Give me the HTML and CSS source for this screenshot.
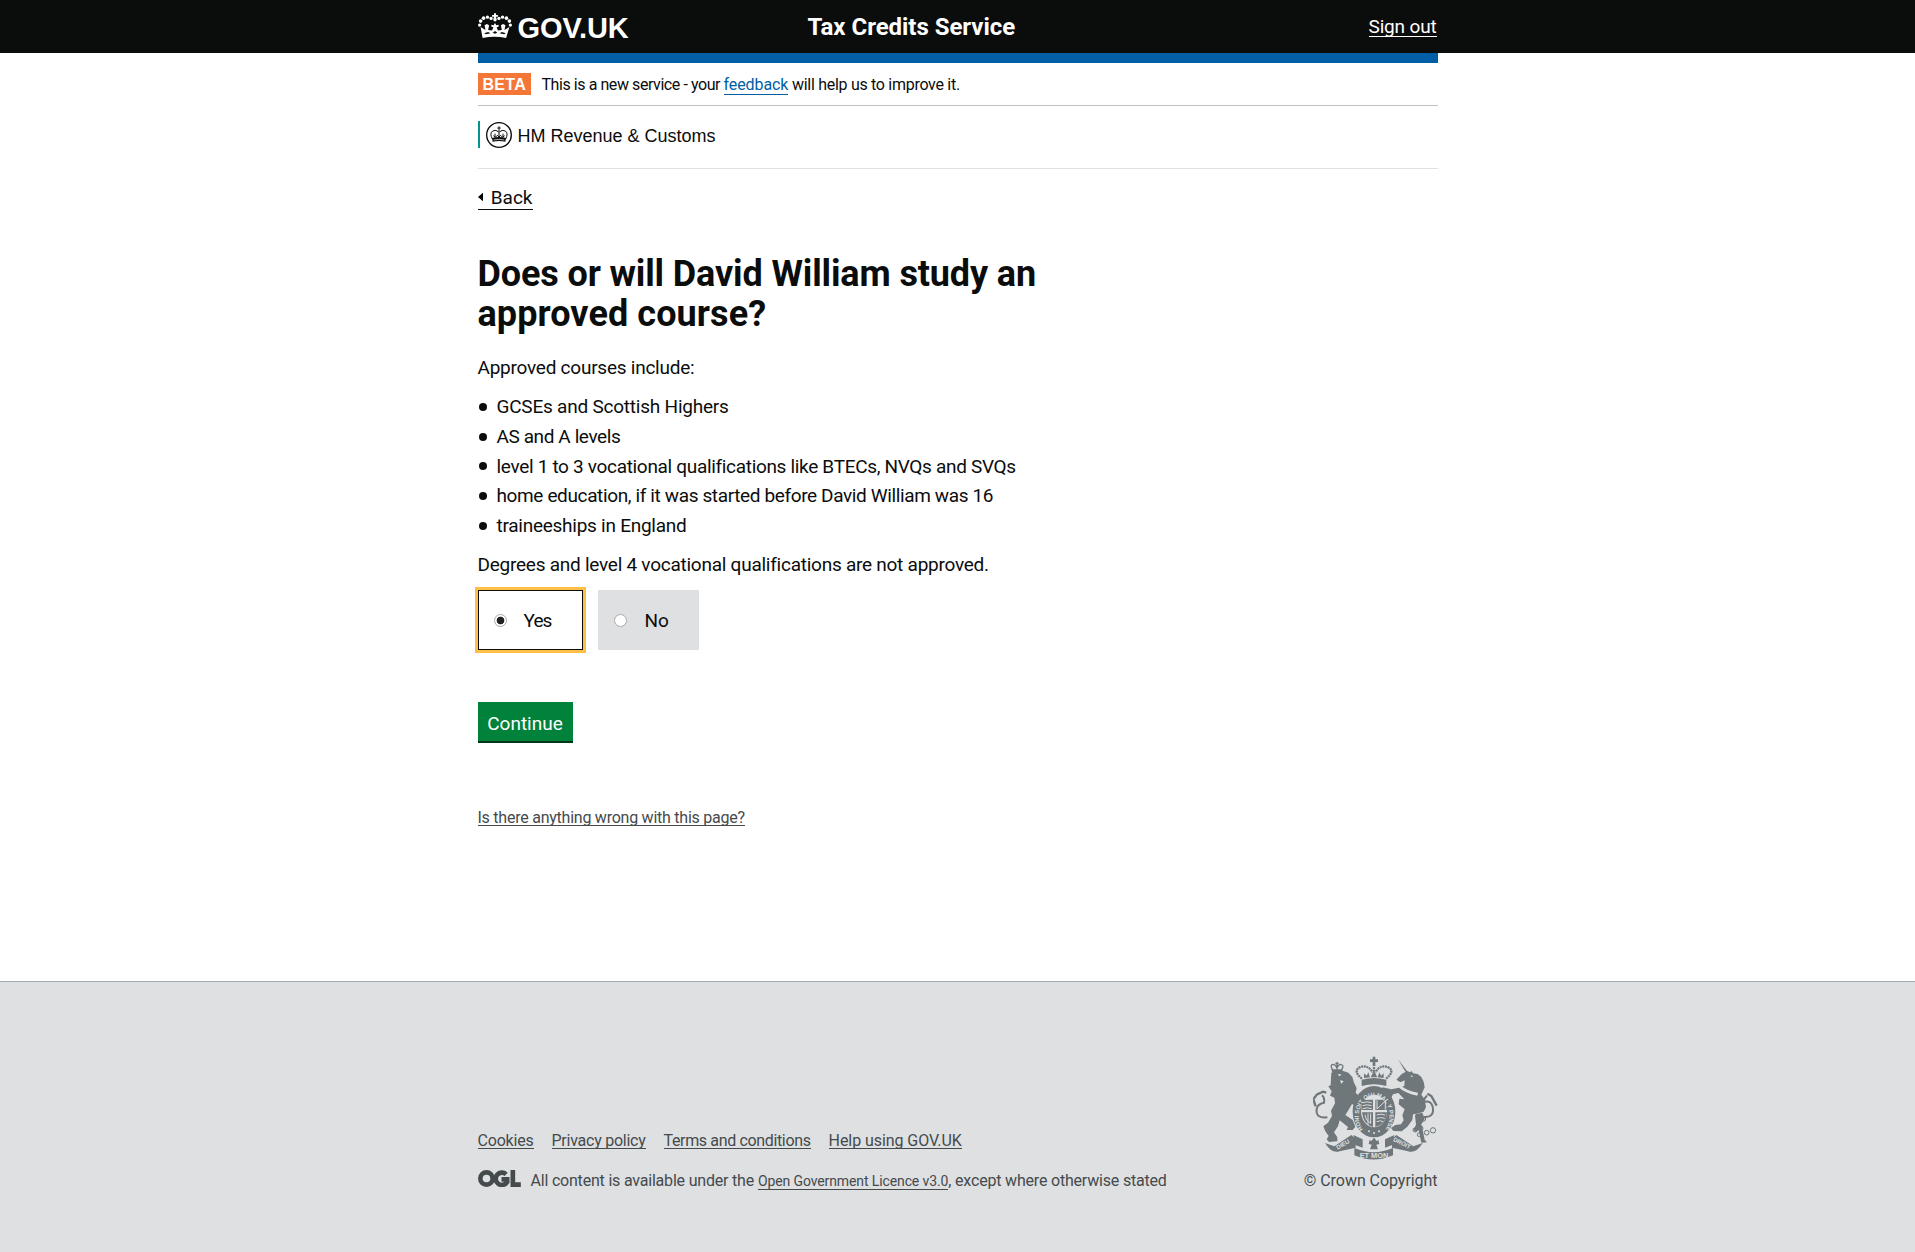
FILE: index.html
```html
<!DOCTYPE html>
<html lang="en">
<head>
<meta charset="utf-8">
<title>Tax Credits Service</title>
<link rel="stylesheet" href="styles.css">
</head>
<body>
<header class="site-header">
  <div class="wrap header-row">
    <a class="brand" href="#">
      <svg class="crown" viewBox="0 0 104 78" aria-hidden="true">
        <g fill="#fff">
          <path d="M49 0h6v5h6v6h-6l2 8h-10l2-8h-6V5h6z"/>
          <circle cx="52" cy="20" r="5"/><circle cx="40" cy="16" r="5"/><circle cx="64" cy="16" r="5"/>
          <circle cx="29" cy="12" r="5"/><circle cx="75" cy="12" r="5"/><circle cx="17" cy="15" r="5.5"/><circle cx="87" cy="15" r="5.5"/>
          <circle cx="8" cy="24" r="5.5"/><circle cx="96" cy="24" r="5.5"/><circle cx="5" cy="36" r="5"/><circle cx="99" cy="36" r="5"/>
          <path d="M8 42l15 9-3-14 7-4 7 4-3 14 12 2 4-10-6-2v-6l7 2 4-7 4 7 7-2v6l-6 2 4 10 12-2-3-14 7-4 7 4-3 14 15-9-10 34q-36-9-72 0z"/>
        </g>
        <g fill="#0b0c0c"><path d="M19 61l12-4 7 4-14 3zM85 61l-12-4-7 4 14 3zM45 60l7-6 7 6-7 3z"/></g>
      </svg>
      <span class="brand-name">GOV.UK</span>
    </a>
    <span class="service">Tax Credits Service</span>
    <a class="sign-out" href="#">Sign out</a>
  </div>
</header>
<main class="wrap">
  <div class="blue-bar"></div>
  <div class="phase">
    <strong class="badge">BETA</strong>
    <span class="phase-text"><span class="phase-start">This is a new service - your </span><a href="#">feedback</a> will help us to improve it.</span>
  </div>
  <div class="org">
    <div class="org-logo">
      <svg viewBox="0 0 78 78" class="org-crest" aria-hidden="true">
        <circle cx="39" cy="39" r="37" fill="none" stroke="#0b0c0c" stroke-width="4"/>
        <g fill="none" stroke="#0b0c0c" stroke-width="3"><path d="M19 51Q10 34 20 27q10-6 19 4 9-10 19-4 10 7 1 24"/><path d="M39 13v16M34 18h10M39 32v14M27 35v10M51 35v10M22 41l6 5 6-6 5 5 5-5 6 6 6-5"/></g>
        <path d="M18 48q21-6 42 0l-2 11q-19-4-38 0z" fill="#0b0c0c"/><path d="M23 54q16-4 32 0" stroke="#fff" stroke-width="2" fill="none"/>
      </svg>
      <span class="org-name">HM Revenue &amp; Customs</span>
    </div>
  </div>
  <a class="back" href="#"><svg viewBox="0 0 6 10" class="back-arrow" aria-hidden="true"><path d="M6 0v10L0 5z"/></svg><span>Back</span></a>
  <h1><span class="heading-start">Does or will David William study an</span><br><span class="heading-end">approved course?</span></h1>
  <p class="intro">Approved courses include:</p>
  <ul class="courses">
    <li class="schools">GCSEs and Scottish Highers</li>
    <li class="a-levels">AS and A levels</li>
    <li class="vocational">level 1 to 3 vocational qualifications like BTECs, NVQs and SVQs</li>
    <li class="home">home education, if it was started before David William was 16</li>
    <li class="trainee">traineeships in England</li>
  </ul>
  <p class="note">Degrees and level 4 vocational qualifications are not approved.</p>
  <form class="answers">
    <label class="choice selected"><input type="radio" name="approved" checked><span>Yes</span></label>
    <label class="choice"><input type="radio" name="approved"><span>No</span></label>
  </form>
  <button class="continue" type="button">Continue</button>
  <a class="report" href="#">Is there anything wrong with this page?</a>
</main>
<footer class="site-footer">
  <div class="wrap footer-row">
    <div class="footer-meta">
      <nav class="footer-links"><a class="cookies" href="#">Cookies</a><a class="privacy" href="#">Privacy policy</a><a class="terms" href="#">Terms and conditions</a><a class="help" href="#">Help using GOV.UK</a></nav>
      <div class="licence">
        <svg class="ogl" viewBox="0 0 128 51" aria-hidden="true"><g fill="none" stroke="#454a4d" stroke-width="14"><circle cx="25" cy="25.500" r="18.500"/><path d="M84 13A18.500 18.500 0 1 0 87 36V28H70M104 0V44H128"/></g></svg>
        <span class="licence-start">All content is available under the</span>
        <a class="licence-link" href="#">Open Government Licence v3.0</a><span class="licence-end">, except where otherwise stated</span>
      </div>
    </div>
    <div class="copyright">
      <svg class="arms" viewBox="69 48 375 312" role="img" aria-label="Royal coat of arms">
        <g fill="#6f777b">
          <path d="M248 50h8v8h8v8h-8v12h-8V66h-8v-8h8z"/>
          <path d="M124 88h32l3 11q-16-5-31 3z"/>
          <path d="M124 98l34-6 17 6 12 13 5 17 8 16-3 14 12 12-10 10 15 10 4 15-15-3-17-10-10 17-10 16 22 15 8 20-8 10h-18l4-9-25-20-5 18-12 18 10 15v12l-25 2-7-8 6-10-10-14-6-15 14-11 12-20-3-16 12-22-2-17-13-6 5-13-10-15 7-3z"/>
          <path d="M324 58l30 39-5 3zM352 93l8 4 5-4 4 7 14 2 11 9 7 14 3 17-10 22 10 14 4 22-7 15-20 6-12 2-2 17-15 20-17 14-25-1-7-9 13-9 17-2 8-12-4-15 7-18-18-15 2-17 15 2-18-19-16 4-8 16 8 14-7 3-14-19 4-19-17-8 3-8 26 6 19-4 20-6 1-17-13 6-12-8 16-17z"/>
          <path d="M377 223l20-5 7 19-10 16 5 22 5 24 7 8-17 1-8-38-8 6-8-7 8-15-3-27z"/>
          <path d="M105 309l28 10 51-34 13 12v26l-48 11q-24 8-44-25zM398 309l-28 10-51-34-13 12v26l48 11q24 8 44-25z"/>
          <path d="M193 324q58 25 116 0v22q-58 25-116 0zM190 285l28 13v25l-22-8zM313 285l-28 13v25l22-8z"/>
          <path d="M215 119q37-10 74 0v19q-37-10-74 0zM222 114v-14l8 7 5-10 5 15zM242 112l10-20 10 20zM263 112l5-15 5 10 8-7v14z"/>
          <ellipse cx="252" cy="215" rx="64" ry="77"/>
          <path d="M252 293l8 10 5-3 3 12-9 2 5 14h-24l5-14-9-2 3-12 5 3z"/>
        </g>
        <g fill="none" stroke="#6f777b">
          <path d="M128 90q-10-17 2-17 8 1 11 12 3-11 10-12 13 1 4 17M141 66v20M136 70h10" stroke-width="4"/>
          <path d="M216 116Q188 94 209 82q24-10 39 15M288 116q28-22 7-34-24-10-39 15M252 81v15" stroke-width="7" stroke-dasharray="6 2"/>
          <path d="M112 232q-36 4-32-25 2-15 22-19 3-14-6-22M399 231q36 3 29-31-5-20-27-14 2-13 10-19" stroke-width="6"/>
          <path d="M77 199l-7-21 11-15 18-8 10 3M440 197l-16-29-12-7" stroke-width="7"/>
          <path d="M328 138q17 17 55 25" stroke="#dee0e2" stroke-width="9"/><path d="M330 151q22 17 52 22" stroke-width="7" stroke-dasharray="6 3"/>
          <g stroke-width="3"><circle cx="398" cy="205" r="6"/><circle cx="400" cy="237" r="7"/><circle cx="392" cy="265" r="7"/><circle cx="375" cy="270" r="6"/><circle cx="388" cy="284" r="6"/><circle cx="410" cy="278" r="7"/><circle cx="429" cy="271" r="8"/></g>
        </g>
        <ellipse cx="252" cy="213" rx="39" ry="49" fill="#dee0e2"/>
        <g fill="#6f777b"><path d="M216 179h33v31h-35zM256 179h32l3 31h-35zM216 217h33v44q-29-7-33-44zM256 217h35q-4 37-35 44z"/></g>
        <g stroke="#dee0e2" stroke-width="3" fill="none"><path d="M218 188q14-5 27 0M218 197q14-5 27 0M218 206q14-5 27 0M261 181v26l25-24v26M225 224q3 22 18 24M234 220v35M242 220v31M260 225q13-5 25 0M260 235q13-5 24 0M260 245q12-5 20 0"/></g>
        <path id="motto" d="M219 268A46 58 0 1 1 288 265" fill="none"/>
        <text class="arms-text garter"><textPath href="#motto" textLength="248" lengthAdjust="spacingAndGlyphs">HONI SOIT QUI MAL Y PENSE</textPath></text>
        <path d="M143 101l12 3-7 5zM151 120l10 4-8 8zM364 106l6 3-7 3z" fill="#dee0e2"/>
        <g fill="#dee0e2"><circle cx="237" cy="274" r="3"/><circle cx="252" cy="279" r="3"/><circle cx="267" cy="274" r="3"/></g>
        <text class="arms-text" transform="translate(143 329) rotate(-30)">DIEU</text>
        <text class="arms-text large" x="209" y="353" textLength="86" lengthAdjust="spacingAndGlyphs">ET MON</text>
        <text class="arms-text" transform="translate(308 302) rotate(27)">DROIT</text>
      </svg>
      <a class="copy" href="#">© Crown Copyright</a>
    </div>
  </div>
</footer>
</body>
</html>
```
FILE: styles.css
```css
* { box-sizing: border-box; }
body { margin: 0; font-family: Roboto, "Liberation Sans", sans-serif; font-size: 19px; line-height: 25px; color: #0b0c0c; background: #fff; }
a { color: inherit; text-decoration: none; }
.wrap { width: 960px; margin: 0 auto; }
span, a, p, li { white-space: nowrap; }

.site-header { height: 53px; background: #0b0c0c; color: #fff; }
.header-row { display: grid; grid-template-columns: 330px 1fr auto; align-items: start; }
.brand { display: flex; gap: 6px; }
.crown { width: 34px; height: 26px; margin-top: 13px; }
.brand-name { font-family: "Liberation Sans", Arial, sans-serif; font-size: 29px; font-weight: 700; line-height: 36px; margin-top: 10px; letter-spacing: -.1px; }
.service { font-size: 24px; font-weight: 700; line-height: 30px; margin-top: 12px; letter-spacing: -.04px; }
.sign-out { line-height: 22px; margin: 16px 1px 0 0; height: 21px; letter-spacing: -.17px; border-bottom: 1px solid #fff; }

.blue-bar { height: 10px; background: #005ea5; }
.phase { display: flex; align-items: center; gap: 11px; height: 43px; border-bottom: 1px solid #bfc1c3; font-size: 16px; }
.badge { width: 53px; height: 22px; background: #f47738; color: #fff; font: 700 16px/23px "Liberation Sans", sans-serif; padding-left: 5px; letter-spacing: .3px; }
.phase-text { letter-spacing: -.29px; }
.phase-start { letter-spacing: -.43px; }
.phase-text a { color: #005ea5; letter-spacing: -.1px; border-bottom: 1px solid #005ea5; }
.org { height: 63px; padding-top: 15px; border-bottom: 1px solid #dee0e2; }
.org-logo { display: flex; align-items: center; height: 27px; border-left: 2px solid #009390; padding-left: 6px; }
.org-crest { width: 26px; height: 26px; margin-right: 6px; }
.org-name { font-family: "Liberation Sans", Arial, sans-serif; font-size: 18px; line-height: 27px; padding-top: 4px; }

.back { display: flex; align-items: center; width: 55px; height: 25px; margin-top: 16px; line-height: 24px; border-bottom: 1px solid #0b0c0c; }
.back span { padding-top: 2px; }
.back-arrow { width: 6px; height: 10px; margin-right: 8px; }
h1 { margin: 44px 0 21px; font-size: 36px; line-height: 40px; font-weight: 700; }
.heading-start { letter-spacing: -.13px; }
.heading-end { letter-spacing: .08px; }
.intro { margin: 0 0 12px; letter-spacing: -.24px; }
.courses { list-style: none; margin: 0 0 11.25px; padding: 0; line-height: 29.75px; }
.courses li { display: flex; align-items: center; }
.courses li::before { content: ""; width: 8px; height: 8px; margin: 0 10px 0 1px; border-radius: 50%; background: #0b0c0c; }
.schools { letter-spacing: -.22px; }
.a-levels { letter-spacing: -.4px; }
.vocational { letter-spacing: -.32px; }
.home { letter-spacing: -.37px; }
.trainee { letter-spacing: -.26px; }
.note { margin: 0 0 13px; letter-spacing: -.25px; }
.answers { display: flex; gap: 15px; margin-bottom: 52px; }
.choice { display: flex; align-items: center; width: 101px; height: 60px; padding-left: 16px; background: #dee0e2; }
.choice input { appearance: none; width: 13px; height: 13px; margin: 0 18px 0 0; border: 1px solid #aaa; border-radius: 50%; background: #fff; }
.choice input:checked { margin-right: 17px; background: radial-gradient(circle, #222 3.5px, #fff 4.2px); }
.selected { width: 105px; padding-left: 15px; letter-spacing: -.9px; border: 1px solid #0b0c0c; background: #fff; outline: 3px solid #ffbf47; }
.continue { display: block; width: 95px; height: 41px; padding: 5px 0 0; border: 0; border-bottom: 2px solid #003618; background: #00823b; color: #fff; font: 19px/34px Roboto, sans-serif; }
.report { display: block; width: 267px; height: 18px; margin-top: 65px; font-size: 16px; line-height: 19px; letter-spacing: -.24px; color: #454a4d; border-bottom: 1px solid #454a4d; }

.site-footer { margin-top: 155px; height: 271px; border-top: 1px solid #a1acb2; background: #dee0e2; color: #454a4d; font-size: 16px; }
.footer-row { display: flex; justify-content: space-between; padding-top: 74px; }
.footer-meta { padding-top: 76px; }
.footer-links { display: flex; gap: 18px; line-height: 18px; }
.footer-links a { height: 17px; border-bottom: 1px solid #454a4d; }
.cookies { letter-spacing: -.2px; }
.privacy { letter-spacing: -.25px; }
.terms { letter-spacing: -.35px; }
.help { letter-spacing: -.07px; }
.licence { display: flex; align-items: baseline; margin-top: 20px; line-height: 20px; }
.ogl { width: 43px; height: 17px; margin-right: 10px; transform: translateY(1px); }
.licence-start { letter-spacing: -.2px; }
.licence-link { font-size: 14px; line-height: 16px; margin-left: 4px; letter-spacing: -.11px; border-bottom: 1px solid #454a4d; }
.licence-end { letter-spacing: -.19px; }
.copyright { display: flex; flex-direction: column; align-items: flex-end; }
.arms { width: 125px; height: 104px; }
.copy { line-height: 20px; margin-top: 11px; letter-spacing: -.05px; }
.arms-text { font: 700 18px "Liberation Sans", sans-serif; fill: #dee0e2; }
.arms-text.large { font-size: 21px; }
.arms-text.garter { font-size: 18px; }
```
